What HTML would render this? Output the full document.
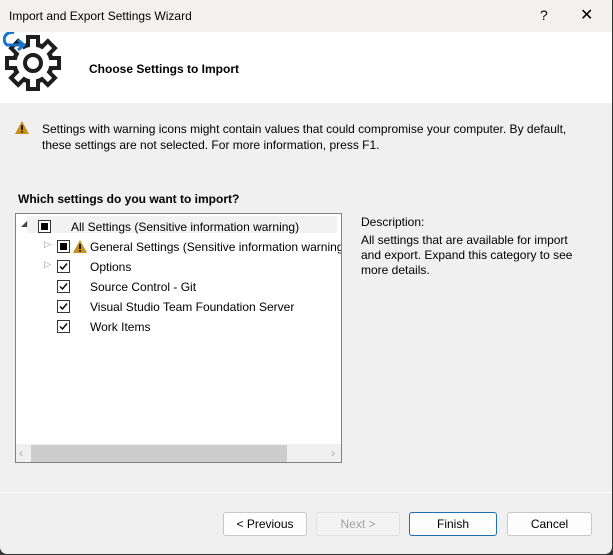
<!DOCTYPE html>
<html><head><style>
body{margin:0;width:613px;height:555px;background:#333;font-family:"Liberation Sans",sans-serif;font-size:12px;color:#000;overflow:hidden}
.win{position:absolute;left:0;top:0;width:612px;height:554px;background:#f0f0f0;border-radius:0 0 7px 7px;overflow:hidden}
.title{position:absolute;left:0;top:0;width:613px;height:32px;background:#f3f1ee}
.title span{position:absolute;left:9px;top:9px;font-size:12px}
.hdr{position:absolute;left:0;top:32px;width:613px;height:71px;background:#fff}
.abs{position:absolute;white-space:nowrap}
.tree{position:absolute;left:15px;top:213px;width:325px;height:248px;background:#fff;border:1px solid #828282;overflow:hidden}
.cb{position:absolute;width:11px;height:11px;border:1px solid #333;background:#fff}
.cb.sq::after{content:"";position:absolute;left:2px;top:2px;width:7px;height:7px;background:#000}
.ck{position:absolute}
.btn{position:absolute;top:512px;height:22px;border:1px solid #c8c8c8;background:#fdfdfd;border-radius:3px;text-align:center;line-height:22px;font-size:12px}
</style></head><body><div class="win">
<div class="title"><span>Import and Export Settings Wizard</span>
<span style="left:540px;top:7px;font-size:14px">?</span>
<span style="left:580px;top:5px;font-size:16px">✕</span></div>
<div class="hdr">
<svg style="position:absolute;left:3px;top:0" width="62" height="62" viewBox="0 0 62 62">
<g transform="translate(30,31)">
<g fill="#1e1e1e">
<circle r="21"/>
<g id="t"><rect x="-7" y="-28" width="14" height="12"/></g>
<use href="#t" transform="rotate(45)"/><use href="#t" transform="rotate(90)"/><use href="#t" transform="rotate(135)"/>
<use href="#t" transform="rotate(180)"/><use href="#t" transform="rotate(225)"/><use href="#t" transform="rotate(270)"/><use href="#t" transform="rotate(315)"/>
</g>
<g fill="#fff">
<circle r="16.5"/>
<g id="w"><rect x="-3" y="-24" width="6" height="10"/></g>
<use href="#w" transform="rotate(45)"/><use href="#w" transform="rotate(90)"/><use href="#w" transform="rotate(135)"/>
<use href="#w" transform="rotate(180)"/><use href="#w" transform="rotate(225)"/><use href="#w" transform="rotate(270)"/><use href="#w" transform="rotate(315)"/>
</g>
<circle r="8" fill="#fff" stroke="#1e1e1e" stroke-width="4"/>
</g>
<path d="M11 1 A7 7 0 0 0 4 13 L19 13" fill="none" stroke="#1a73c8" stroke-width="3"/>
<path d="M15 8 L21 13 L15 18" fill="none" stroke="#1a73c8" stroke-width="3"/>
</svg>
<div class="abs" style="left:89px;top:30px;font-weight:bold">Choose Settings to Import</div></div>
<svg class="abs" style="left:15px;top:121px" width="14" height="13"><path d="M7 0L14 13H0Z" fill="#c8901a"/><rect x="6.2" y="4" width="1.6" height="5" fill="#000"/><rect x="6.2" y="10" width="1.6" height="1.6" fill="#000"/></svg>
<div class="abs" style="left:42px;top:121px;line-height:16px">Settings with warning icons might contain values that could compromise your computer. By default,<br>these settings are not selected. For more information, press F1.</div>
<div class="abs" style="left:18px;top:192px;font-weight:bold">Which settings do you want to import?</div>
<div class="tree">
<div class="abs" style="left:11px;top:2px;width:310px;height:17px;background:#f2f2f2"></div>
<div class="abs" style="left:5px;top:5px;font-size:8px;color:#444">◢</div>
<div class="cb sq" style="left:22px;top:6px"></div>
<div class="abs" style="left:55px;top:6px">All Settings (Sensitive information warning)</div>
<div class="abs" style="left:28px;top:25px;font-size:9px;color:#999">▷</div>
<div class="cb sq" style="left:41px;top:26px"></div>
<svg class="abs" style="left:57px;top:26px" width="14" height="13"><path d="M7 0L14 13H0Z" fill="#c8901a"/><rect x="6.2" y="4" width="1.6" height="5" fill="#000"/><rect x="6.2" y="10" width="1.6" height="1.6" fill="#000"/></svg>
<div class="abs" style="left:74px;top:26px">General Settings (Sensitive information warning</div>
<div class="abs" style="left:28px;top:45px;font-size:9px;color:#999">▷</div>
<div class="cb" style="left:41px;top:46px"></div><svg class="ck" style="left:41px;top:46px" width="13" height="13"><path d="M3 6.5L5.5 9L10 3.5" fill="none" stroke="#000" stroke-width="1.4"/></svg>
<div class="abs" style="left:74px;top:46px">Options</div>
<div class="cb" style="left:41px;top:66px"></div><svg class="ck" style="left:41px;top:66px" width="13" height="13"><path d="M3 6.5L5.5 9L10 3.5" fill="none" stroke="#000" stroke-width="1.4"/></svg>
<div class="abs" style="left:74px;top:66px">Source Control - Git</div>
<div class="cb" style="left:41px;top:86px"></div><svg class="ck" style="left:41px;top:86px" width="13" height="13"><path d="M3 6.5L5.5 9L10 3.5" fill="none" stroke="#000" stroke-width="1.4"/></svg>
<div class="abs" style="left:74px;top:86px">Visual Studio Team Foundation Server</div>
<div class="cb" style="left:41px;top:106px"></div><svg class="ck" style="left:41px;top:106px" width="13" height="13"><path d="M3 6.5L5.5 9L10 3.5" fill="none" stroke="#000" stroke-width="1.4"/></svg>
<div class="abs" style="left:74px;top:106px">Work Items</div>
<div class="abs" style="left:0;top:230px;width:325px;height:18px;background:#f0f0f0"></div>
<div class="abs" style="left:15px;top:231px;width:256px;height:17px;background:#cdcdcd"></div>
<div class="abs" style="left:3px;top:232px;color:#aaa">‹</div>
<div class="abs" style="left:315px;top:232px;color:#aaa">›</div>
</div>
<div class="abs" style="left:361px;top:215px;line-height:15px">Description:</div>
<div class="abs" style="left:361px;top:233px;line-height:15px">All settings that are available for import<br>and export. Expand this category to see<br>more details.</div>
<div class="abs" style="left:0;top:492px;width:613px;height:1px;background:#fff"></div>
<div class="btn" style="left:223px;width:82px">&lt; Previous</div>
<div class="btn" style="left:316px;width:82px;color:#a0a0a0;border-color:#e0e0e0;background:#f3f3f3">Next &gt;</div>
<div class="btn" style="left:409px;width:86px;border-color:#1f6fb5">Finish</div>
<div class="btn" style="left:507px;width:83px">Cancel</div>
</div></body></html>
